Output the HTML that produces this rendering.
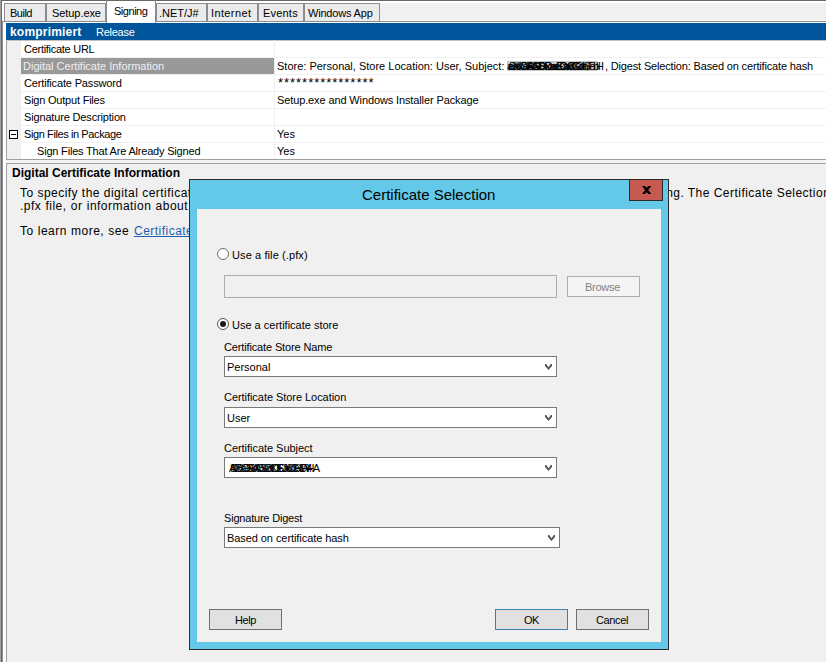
<!DOCTYPE html>
<html><head><meta charset="utf-8">
<style>
*{margin:0;padding:0;box-sizing:border-box}
html,body{width:826px;height:662px;overflow:hidden;background:#f0f0f0;font-family:"Liberation Sans",sans-serif;font-size:11px;color:#000}
.a{position:absolute}
.t{position:absolute;white-space:nowrap;line-height:12px;font-size:11px}
.tab{position:absolute;top:3px;height:19px;background:#ebebeb;border:1px solid #898c95}
.row{position:absolute;left:21px;width:805px;height:1px;background:#f0f0f0}
.combo{position:absolute;left:224px;width:333px;height:21px;background:#fff;border:1px solid #7a7a7a}
.arrow{position:absolute;right:3px;top:6px;width:9px;height:7px;overflow:visible}
.btn{position:absolute;top:609px;width:73px;height:21px;background:#e1e1e1;border:1px solid #adadad}
.d{position:absolute;white-space:nowrap;font-size:12px;line-height:13px;letter-spacing:0.47px}
</style></head><body>

<!-- outer frame -->
<div class="a" style="left:0;top:0;width:826px;height:1px;background:#696969"></div>
<div class="a" style="left:0;top:0;width:1px;height:662px;background:#a0a0a0"></div>
<div class="a" style="left:1px;top:0;width:1px;height:662px;background:#696969"></div>
<div class="a" style="left:2px;top:1px;width:824px;height:2px;background:#fff"></div>
<div class="a" style="left:2px;top:1px;width:4px;height:661px;background:#fff"></div>
<div class="a" style="left:6px;top:3px;width:820px;height:17px;background:#f0f0f0"></div>
<div class="a" style="left:2px;top:20px;width:824px;height:1px;background:#fff"></div>
<div class="a" style="left:2px;top:21px;width:824px;height:1px;background:#898c95"></div>
<div class="a" style="left:3px;top:22px;width:823px;height:1px;background:#fff"></div>
<div class="a" style="left:2px;top:21px;width:1px;height:641px;background:#898c95"></div>

<!-- tabs -->
<div class="tab" style="left:4px;width:42px"></div>
<div class="tab" style="left:46px;width:60px"></div>
<div class="tab" style="left:156px;width:51px"></div>
<div class="tab" style="left:207px;width:51px"></div>
<div class="tab" style="left:258px;width:46px"></div>
<div class="tab" style="left:304px;width:76px"></div>
<div class="a" style="left:106px;top:0;width:50px;height:23px;background:#fff;border:1px solid #898c95;border-bottom:none;border-top-color:#696969"></div>
<div class="t" style="left:10px;top:7px;letter-spacing:-0.5px">Build</div>
<div class="t" style="left:52px;top:7px;letter-spacing:-0.07px">Setup.exe</div>
<div class="t" style="left:114px;top:5px;letter-spacing:-0.47px">Signing</div>
<div class="t" style="left:159px;top:7px">.NET/J#</div>
<div class="t" style="left:211px;top:7px;letter-spacing:0.38px">Internet</div>
<div class="t" style="left:263px;top:7px;letter-spacing:0.2px">Events</div>
<div class="t" style="left:308px;top:7px;letter-spacing:-0.19px">Windows App</div>

<!-- property grid -->
<div class="a" style="left:6px;top:23px;width:820px;height:17px;background:#00559b"></div>
<div class="t" style="left:10px;top:26px;color:#fff;font-weight:bold;font-size:12px;line-height:13px;letter-spacing:0.2px">komprimiert</div>
<div class="t" style="left:96px;top:26px;color:#fff;letter-spacing:-0.25px">Release</div>
<div class="a" style="left:6px;top:40px;width:1px;height:120px;background:#a0a0a0"></div>
<div class="a" style="left:7px;top:40px;width:819px;height:119px;background:#fff"></div>
<div class="a" style="left:7px;top:41px;width:14px;height:118px;background:#f0f0f0"></div>
<div class="a" style="left:6px;top:40px;width:820px;height:1px;background:#c4c0bc"></div>
<div class="row" style="top:57px"></div>
<div class="row" style="top:74px"></div>
<div class="row" style="top:91px"></div>
<div class="row" style="top:108px"></div>
<div class="row" style="top:125px"></div>
<div class="row" style="top:142px"></div>
<div class="a" style="left:274px;top:40px;width:1px;height:119px;background:#f0f0f0"></div>
<div class="a" style="left:6px;top:159px;width:820px;height:1px;background:#a0a0a0"></div>
<div class="a" style="left:6px;top:160px;width:820px;height:3px;background:#f4f4f4"></div>
<div class="a" style="left:21px;top:58px;width:253px;height:16px;background:#999"></div>

<div class="t" style="left:24px;top:43px;letter-spacing:-0.28px">Certificate URL</div>
<div class="t" style="left:23px;top:60px;color:#f0f0f0">Digital Certificate Information</div>
<div class="t" style="left:24px;top:77px;letter-spacing:-0.16px">Certificate Password</div>
<div class="t" style="left:24px;top:94px;letter-spacing:-0.21px">Sign Output Files</div>
<div class="t" style="left:24px;top:111px;letter-spacing:-0.16px">Signature Description</div>
<div class="t" style="left:24px;top:128px;letter-spacing:-0.4px">Sign Files in Package</div>
<div class="t" style="left:37px;top:145px;letter-spacing:-0.19px">Sign Files That Are Already Signed</div>
<div class="a" style="left:9px;top:130px;width:9px;height:9px;border:1px solid #000;background:#fff"></div>
<div class="a" style="left:11px;top:134px;width:5px;height:1px;background:#000"></div>

<div class="t" style="left:277px;top:60px">Store: Personal, Store Location: User, Subject:</div>
<div class="a" style="left:507px;top:61px;width:90px;height:10px;background:#c8c8c8"></div>
<div class="t" style="left:507px;top:60px;letter-spacing:-0.9px">aXGFASDxEx6Cx6b</div>
<div class="t" style="left:509px;top:60px;letter-spacing:-1.1px">0XCAS6DaEaOOaFbl</div>
<div class="t" style="left:508px;top:60px;letter-spacing:-1.3px;font-weight:bold">eaxa6SDxaeOxGd</div>

<div class="t" style="left:596px;top:60px">H</div>
<div class="t" style="left:605px;top:60px;letter-spacing:-0.16px">, Digest Selection: Based on certificate hash</div>
<div class="t" style="left:278px;top:77px;font-size:13px;letter-spacing:0.97px">****************</div>
<div class="t" style="left:277px;top:94px;letter-spacing:-0.12px">Setup.exe and Windows Installer Package</div>
<div class="t" style="left:277px;top:128px">Yes</div>
<div class="t" style="left:277px;top:145px">Yes</div>

<!-- description pane -->
<div class="a" style="left:6px;top:163px;width:820px;height:1px;background:#a0a0a0"></div>
<div class="a" style="left:6px;top:163px;width:1px;height:499px;background:#a0a0a0"></div>
<div class="t" style="left:12px;top:167px;font-weight:bold;font-size:12px;line-height:13px">Digital Certificate Information</div>
<div class="d" style="left:20px;top:187px">To specify the digital certificate used to sign</div>
<div class="d" style="left:20px;top:200px;word-spacing:0.5px">.pfx file, or information about a certificate</div>
<div class="d" style="left:20px;top:225px;word-spacing:0.4px">To learn more, see <span style="margin-left:0.8px;color:#1f5fae;text-decoration:underline">Certificates</span>.</div>
<div class="d" style="left:663px;top:187px">ing. The Certificate Selection</div>

<!-- dialog -->
<div class="a" style="left:189px;top:179px;width:480px;height:471px;background:#64c8e9;border:1px solid #2b2b2b"></div>
<div class="a" style="left:197px;top:209px;width:464px;height:433px;background:#f0f0f0"></div>
<div class="a" style="left:629px;top:179px;width:34px;height:22px;background:#c75a50;border:1px solid #2b2b2b"></div>
<svg class="a" style="left:642px;top:186px" width="10" height="8" viewBox="0 0 10 8"><path d="M0 0 L3.1 0 L9.3 8 L6.2 8 Z M6.2 0 L9.3 0 L3.1 8 L0 8 Z" fill="#000"/></svg>
<div class="t" style="left:362px;top:186px;font-size:15px;line-height:17px;color:#000">Certificate Selection</div>

<div class="a" style="left:217px;top:248px;width:12px;height:12px;border-radius:50%;background:#fff;border:1px solid #707070"></div>
<div class="t" style="left:232px;top:249px;letter-spacing:0.1px">Use a file (.pfx)</div>
<div class="a" style="left:224px;top:275px;width:333px;height:23px;background:#f0f0f0;border:1px solid #adadad"></div>
<div class="a" style="left:567px;top:276px;width:73px;height:21px;background:#f4f4f4;border:1px solid #adadad"></div>
<div class="t" style="left:585px;top:281px;color:#838383;letter-spacing:-0.28px">Browse</div>

<div class="a" style="left:217px;top:318px;width:12px;height:12px;border-radius:50%;background:#fff;border:1px solid #555"></div>
<div class="a" style="left:220px;top:321px;width:6px;height:6px;border-radius:50%;background:#1a1a1a"></div>
<div class="t" style="left:232px;top:319px">Use a certificate store</div>

<div class="t" style="left:224px;top:341px;letter-spacing:-0.14px">Certificate Store Name</div>
<div class="combo" style="top:356px"><div class="t" style="left:2px;top:4px">Personal</div><svg class="arrow" viewBox="0 0 9 7"><path d="M1 1 L2.2 1 L4.5 4.2 L6.8 1 L8 1 L8 3 L4.5 7 L1 3 Z" fill="#555"/></svg></div>
<div class="t" style="left:224px;top:391px;letter-spacing:-0.05px">Certificate Store Location</div>
<div class="combo" style="top:407px"><div class="t" style="left:2px;top:4px">User</div><svg class="arrow" viewBox="0 0 9 7"><path d="M1 1 L2.2 1 L4.5 4.2 L6.8 1 L8 1 L8 3 L4.5 7 L1 3 Z" fill="#555"/></svg></div>
<div class="t" style="left:224px;top:442px;letter-spacing:-0.04px">Certificate Subject</div>
<div class="combo" style="top:457px"><div class="t" style="left:4px;top:4px;letter-spacing:-1.5px">AXGFASDKEJ6CxFHA</div><div class="t" style="left:7px;top:4px;letter-spacing:-1.3px">0BD6AS8D6aO6D4</div><div class="t" style="left:5px;top:4px;letter-spacing:-1.5px">8DaSbDeaODxdHW</div><svg class="arrow" viewBox="0 0 9 7"><path d="M1 1 L2.2 1 L4.5 4.2 L6.8 1 L8 1 L8 3 L4.5 7 L1 3 Z" fill="#555"/></svg></div>
<div class="t" style="left:224px;top:512px;letter-spacing:-0.2px">Signature Digest</div>
<div class="combo" style="top:527px;width:336px"><div class="t" style="left:2px;top:4px;letter-spacing:-0.07px">Based on certificate hash</div><svg class="arrow" viewBox="0 0 9 7"><path d="M1 1 L2.2 1 L4.5 4.2 L6.8 1 L8 1 L8 3 L4.5 7 L1 3 Z" fill="#555"/></svg></div>

<div class="btn" style="left:209px;border-color:#707070"><div class="t" style="left:25px;top:4px;letter-spacing:-0.4px">Help</div></div>
<div class="btn" style="left:495px;border-color:#3c7fb1"><div class="t" style="left:28px;top:4px;letter-spacing:-0.6px">OK</div></div>
<div class="btn" style="left:576px;border-color:#707070"><div class="t" style="left:19px;top:4px;letter-spacing:-0.38px">Cancel</div></div>

</body></html>
